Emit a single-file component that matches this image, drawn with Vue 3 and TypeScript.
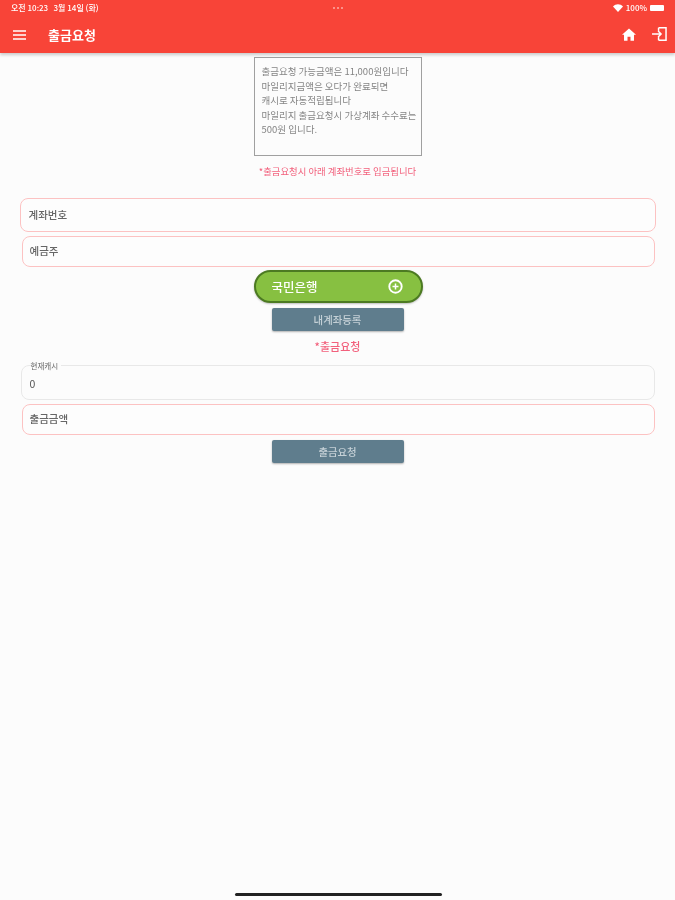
<script setup lang="ts">
const notice: string[] = [
  '출금요청 가능금액은 11,000원입니다',
  '마일리지금액은 오다가 완료되면',
  '캐시로 자동적립됩니다',
  '마일리지 출금요청시 가상계좌 수수료는',
  '500원 입니다.',
]
</script>

<template>
  <div class="page">
    <header class="appbar">
      <div class="status">
        <span class="status-left">오전 10:23 &nbsp; 3월 14일 (화)</span>
        <span class="dots"><i></i><i></i><i></i></span>
        <span class="status-right">
          <svg width="10" height="8" viewBox="0 0 10 8"><path d="M0 2.600C2.800-.5 7.200-.5 10 2.600L5 8Z" fill="#fff" /></svg>
          <span>100%</span>
          <span class="battery"></span>
        </span>
      </div>
      <div class="toolbar">
        <svg class="menu" width="13" height="10" viewBox="0 0 13 10"><path d="M0 1h13M0 5h13M0 9h13" stroke="#fff" stroke-width="1.600" /></svg>
        <h1>출금요청</h1>
        <svg class="home" width="14" height="13" viewBox="0 0 16 14"><path d="M8 0 0 7.200h2.300V14h4v-4.500h3.400V14h4V7.200H16Z" fill="#fff" /></svg>
        <svg class="logout" width="15" height="14" viewBox="0 0 16 15" fill="none" stroke="#fff" stroke-width="1.600"><path d="M7 .8h8v13.400H7M7 .8v3.200M7 11v3.200M0 7.500h9.500M6.500 4.300l3.200 3.200-3.200 3.200" /></svg>
      </div>
    </header>

    <main class="content">
      <section class="notice">
        <p v-for="line in notice" :key="line">{{ line }}</p>
      </section>
      <p class="note">*출금요청시 아래 계좌번호로 입금됩니다</p>

      <div class="field first">계좌번호</div>
      <div class="field second">예금주</div>

      <div class="bank">
        <span>국민은행</span>
        <svg width="15" height="15" viewBox="0 0 15 15" fill="none"><circle cx="7.500" cy="7.500" r="6.200" stroke="#fff" stroke-width="1.900" /><path d="M7.500 4.500v6M4.500 7.500h6" stroke="#fff" stroke-width="1.500" /></svg>
      </div>
      <button class="action register">내계좌등록</button>
      <p class="section-title">*출금요청</p>

      <fieldset class="cash">
        <legend>현재캐시</legend>
        <span>0</span>
      </fieldset>
      <div class="field amount">출금금액</div>
      <button class="action withdraw">출금요청</button>
    </main>

    <div class="home-bar"></div>
  </div>
</template>

<style>
html, body { margin: 0; background: #fcfcfc; }
</style>

<style scoped>
.page {
  width: 675px;
  height: 900px;
  display: flex;
  flex-direction: column;
  overflow: hidden;
  background: #fcfcfc;
  font-family: "Noto Sans CJK KR", "Noto Sans", sans-serif;
}
.appbar {
  height: 53px;
  flex: none;
  background: #f84438;
  color: #fff;
  box-shadow: 0 2px 3px rgba(0, 0, 0, .2);
  position: relative;
  z-index: 1;
}
.status {
  height: 15px;
  display: grid;
  grid-template-columns: 1fr auto 1fr;
  align-items: center;
  padding: 0 11px;
  font-size: 8px;
  font-weight: 500;
  line-height: 15px;
  filter: blur(.4px);
}
.dots { display: flex; gap: 2px; }
.dots i { width: 2px; height: 2px; border-radius: 50%; background: rgba(255, 255, 255, .55); }
.status-right { justify-self: end; display: flex; align-items: center; gap: 3px; }
.battery { width: 14px; height: 6px; background: #fff; border-radius: 1px; }
.toolbar { height: 38px; display: flex; align-items: center; padding: 0 8px 0 13px; filter: blur(.3px); }
.menu { margin-top: 2px; }
h1 { margin: 0 0 0 22px; font-size: 13px; font-weight: 700; flex: 1; }
.home { margin-right: 16px; }
.content {
  flex: 1;
  display: flex;
  flex-direction: column;
  align-items: center;
  padding-top: 4px;
  filter: blur(.6px);
}
.notice {
  box-sizing: border-box;
  width: 168px;
  height: 99px;
  padding: 6px 0 0 7px;
  border: 1px solid #a0a0a0;
  color: #858585;
  font-size: 9.500px;
  line-height: 14.500px;
  white-space: nowrap;
}
.notice p { margin: 0; }
.note {
  margin: 8px 0 0;
  color: #f2607c;
  font-size: 9.400px;
  line-height: 14px;
}
.field {
  box-sizing: border-box;
  display: flex;
  align-items: center;
  border: 1px solid #fcc2c2;
  border-radius: 8px;
  background: #fdfdfd;
  color: #666;
  font-size: 10.500px;
  font-weight: 500;
  padding: 0 0 2px 7px;
}
.first { width: 636px; height: 34px; margin-top: 20px; padding-left: 8px; }
.second { width: 633px; height: 31px; margin: 4px 0 0 1px; }
.bank {
  box-sizing: border-box;
  width: 169px;
  height: 33px;
  margin: 3px 0 0 1px;
  padding: 0 18px 0 16px;
  display: flex;
  align-items: center;
  justify-content: space-between;
  background: #87c041;
  border: 2px solid #4c7a22;
  border-radius: 17px;
  color: #fff;
  font-size: 12.500px;
  font-weight: 500;
  box-shadow: 0 1px 2px rgba(0, 0, 0, .25);
}
.action {
  display: block;
  width: 132px;
  height: 23px;
  padding: 0;
  border: 0;
  border-radius: 2px;
  background: #5f7d8d;
  color: #c4d0d6;
  font: inherit;
  font-size: 10.400px;
  font-weight: 500;
  box-shadow: 0 1px 2px rgba(0, 0, 0, .3);
}
.register { margin-top: 5px; }
.section-title {
  margin: 8px 0 0;
  color: #f2607c;
  font-size: 11px;
  font-weight: 500;
  line-height: 14px;
}
.cash {
  box-sizing: border-box;
  width: 634px;
  height: 38px;
  margin: 9px 0 0;
  padding: 4px 8px 0;
  border: 1px solid #e8e8e8;
  border-radius: 8px;
  color: #555;
  font-size: 10.500px;
  line-height: 22px;
}
.cash legend { padding: 0 3px 0 0; margin-left: 1px; font-size: 7.500px; line-height: 7px; color: #666; }
.amount { width: 633px; height: 31px; margin: 4px 0 0 1px; }
.withdraw { margin-top: 5px; }
.home-bar {
  flex: none;
  width: 207px;
  height: 3px;
  margin: auto 0 4px 235px;
  border-radius: 2px;
  background: #222;
}
</style>
